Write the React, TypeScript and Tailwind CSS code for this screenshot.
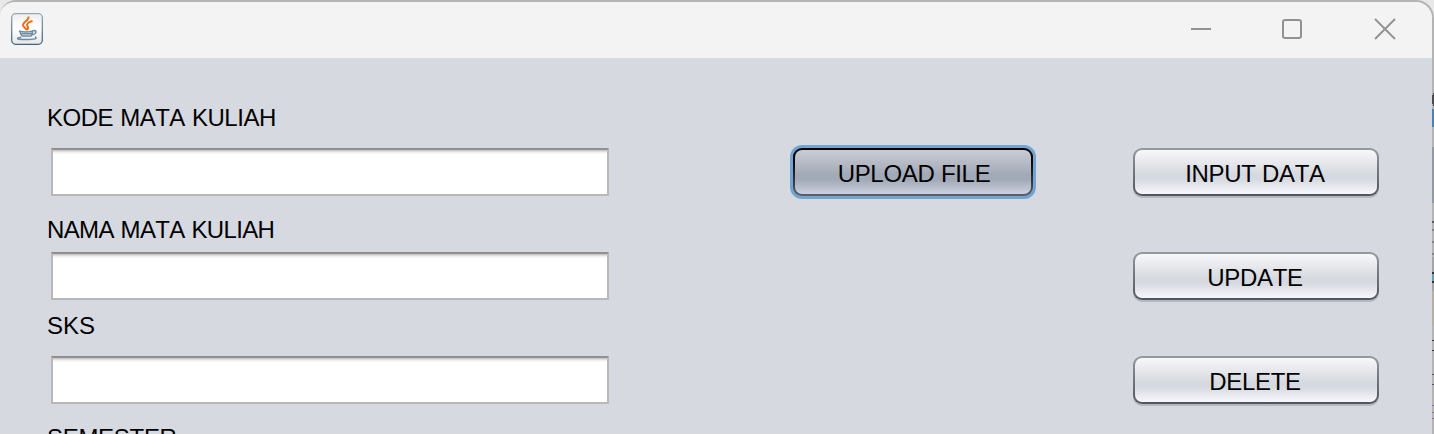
import React from "react";

function Label({ text, className }: { text: string; className: string }) {
  return <div className={`ml-[47px] h-7 whitespace-nowrap leading-7 ${className}`}>{text}</div>;
}

function Field({ className }: { className: string }) {
  return (
    <input
      className={`ml-[51px] block h-12 w-[558px] border-2 border-[#b8b8b8] border-t-[#8f8f8f] bg-[linear-gradient(#cacaca_0px,#cacaca_1px,#dedede_1px,#dedede_2px,#f0f0f0_2px,#f0f0f0_3px,#fff_4px)] outline-none ${className}`}
    />
  );
}

function ActionButton({ text, className }: { text: string; className: string }) {
  return (
    <button
      className={`flex h-12 w-[246px] rounded-[9px] bg-linear-to-b from-[#96989e] to-[#52555c] p-[2px] shadow-[0_2px_0_#b5b8bf] ${className}`}
    >
      <span className="flex h-full w-full items-center justify-center rounded-[7px] bg-[linear-gradient(#f7f8fa_0%,#d6d9df_55%,#d6d9df_66%,#f6f8fc_100%)] pt-1 pr-0.5">
        {text}
      </span>
    </button>
  );
}

function JavaIcon() {
  return (
    <svg width="32" height="32" viewBox="0 0 32 32" fill="none">
      <defs>
        <linearGradient id="tile" x1="0" y1="0" x2="0" y2="1">
          <stop offset="0" stopColor="#f0f0f0" />
          <stop offset=".5" stopColor="#fff" />
          <stop offset="1" stopColor="#e6e6e6" />
        </linearGradient>
        <linearGradient id="edge" x1="0" y1="0" x2="0" y2="1">
          <stop offset="0" stopColor="#94a7b7" />
          <stop offset="1" stopColor="#42647d" />
        </linearGradient>
      </defs>
      <rect x=".7" y=".7" width="30.6" height="30.6" rx="4" fill="url(#tile)" stroke="url(#edge)" strokeWidth="1.3" />
      <path d="M17.500 3.500c1 4-6 5.500-5.500 8.700.3 2.300 3 2.800 3.500 5M21.500 8c-4 1-6.300 3-5 5.200.9 1.500.9 2.300-.3 3.600" stroke="#e8711c" strokeWidth="2" />
      <path d="M8 18c3 1.300 10 1.300 14 0M9 18.500c.3 2 1 3.500 2 4.500h9c1.200-1 1.600-2.500 1.800-4.500M10.500 20.800h10.500M21.500 17.800c4.700-1.300 4.700 3-.8 4.200" stroke="#6d8ba2" strokeWidth="1.500" />
      <path d="M10 24.200c-6 .9-4 2.400 5 2.400s12-1 9-2.600" stroke="#6d8ba2" strokeWidth="1.500" />
    </svg>
  );
}

function BackgroundEdge() {
  return (
    <svg className="absolute top-[58px] right-0" width="2" height="376" viewBox="0 58 2 376" shapeRendering="crispEdges">
      <path fill="#b4b4b4" d="M0 58h2v376H0z" />
      <path fill="#4c4c4c" d="M0 95h1v9H0zM1 93h1v13H1z" />
      <path fill="#4783b8" d="M0 109h2v18H0z" />
      <path fill="#9299a2" d="M0 147h2v56H0z" />
      <path fill="#a5a5a5" d="M0 257h2v34H0z" />
      <path fill="#5c5c5c" d="M0 221h2v2H0z" />
      <path fill="#848484" d="M0 229h2v2H0zM0 241h2v2H0zM0 253h2v2H0z" />
      <path fill="#34332f" d="M0 272h2v2H0zM0 281h2v2H0zM0 340h2v1H0zM0 350h2v1H0z" />
      <path fill="#62a0b8" d="M0 274h2v7H0z" />
      <path fill="#b5b09f" d="M0 291h2v34H0z" />
      <path fill="#515176" d="M0 374h2v1H0zM0 384h2v1H0z" />
      <path fill="#aa62a2" d="M0 405h2v1H0zM0 412h2v1H0zM0 418h2v1H0z" />
    </svg>
  );
}

export default function App() {
  return (
    <div className="relative h-[434px] w-[1434px] overflow-hidden bg-[#e8e8e8] font-['Liberation_Sans',Arial,sans-serif] text-2xl tracking-[-0.3px] text-black [font-kerning:none]">
      <div className="h-[450px] w-[1434px] overflow-hidden rounded-tl-[16px] rounded-tr-[18px] border-t-2 border-r-2 border-[#b4b4b4] bg-[#d6d9e0]">
        <header className="flex h-14 justify-between bg-[#f3f3f3] pt-[11px] pl-[11px]">
          <JavaIcon />
          <svg className="mr-[35px]" width="208" height="32" viewBox="0 0 208 32" fill="none" stroke="#919191" strokeWidth="2">
            <path d="M2 16h20" />
            <rect x="94" y="7" width="18" height="18" rx="2" />
            <path d="m186 6 20 20m0-20-20 20" strokeWidth="1.8" />
          </svg>
        </header>
        <main className="flex">
          <section className="w-[790px] shrink-0">
            <Label text="KODE MATA KULIAH" className="mt-[46px] tracking-[-0.5px] [word-spacing:1px]" />
            <Field className="mt-4" />
            <Label text="NAMA MATA KULIAH" className="mt-5 tracking-[-0.65px] [word-spacing:0.8px]" />
            <Field className="mt-2" />
            <Label text="SKS" className="mt-3 tracking-normal" />
            <Field className="mt-4" />
            <Label text="SEMESTER" className="mt-5" />
          </section>
          <section className="w-[343px] shrink-0 pt-[87px]">
            <button className="flex h-[54px] w-[246px] rounded-xl bg-[#73a4d1] p-[3px]">
              <span className="flex h-full w-full rounded-[9px] bg-linear-to-b from-black to-[#5c606c] p-[2px]">
                <span className="flex h-full w-full items-center justify-center rounded-[7px] bg-[linear-gradient(#c9ccd5_0%,#a3aab7_55%,#a3aab7_68%,#cbd1e0_100%)] pt-1 pl-0.5">
                  UPLOAD FILE
                </span>
              </span>
            </button>
          </section>
          <section className="pt-[90px]">
            <ActionButton text="INPUT DATA" className="mb-14" />
            <ActionButton text="UPDATE" className="mb-14" />
            <ActionButton text="DELETE" className="" />
          </section>
        </main>
      </div>
      <BackgroundEdge />
    </div>
  );
}
